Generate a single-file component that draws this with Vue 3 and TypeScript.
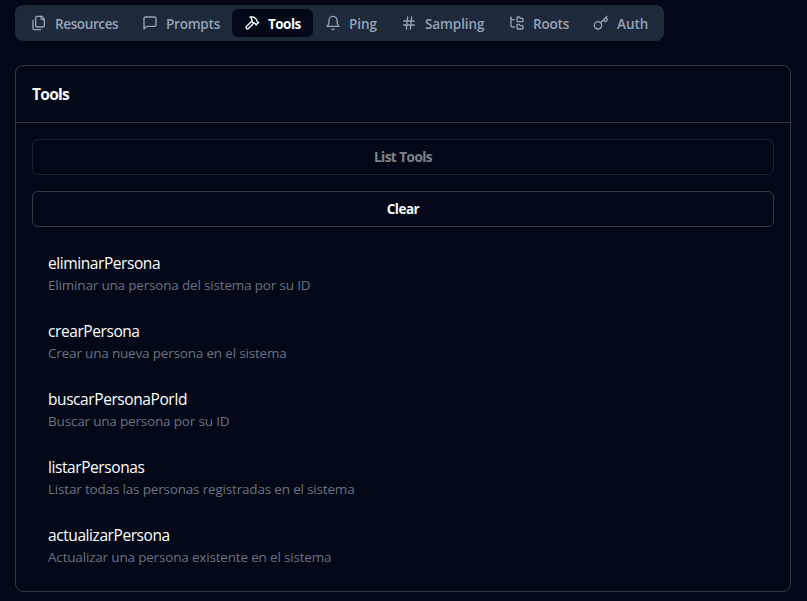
<script setup lang="ts">
interface Tab {
  id: string
  label: string
  width: number
  tracking: number
  paths: string[]
}

interface Tool {
  name: string
  description: string
}

const tabs: Tab[] = [
  {
    id: 'resources',
    label: 'Resources',
    width: 111,
    tracking: -0.38,
    paths: [
      'M20 7h-3a2 2 0 0 1-2-2V2',
      'M9 18a2 2 0 0 1-2-2V4a2 2 0 0 1 2-2h7l4 4v10a2 2 0 0 1-2 2Z',
      'M3 7.6v12.8A1.6 1.6 0 0 0 4.6 22h9.8',
    ],
  },
  {
    id: 'prompts',
    label: 'Prompts',
    width: 102,
    tracking: -0.22,
    paths: ['M21 15a2 2 0 0 1-2 2H7l-4 4V5a2 2 0 0 1 2-2h14a2 2 0 0 1 2 2z'],
  },
  {
    id: 'tools',
    label: 'Tools',
    width: 81,
    tracking: -0.3,
    paths: [
      'm15 12-8.373 8.373a1 1 0 1 1-3-3L12 9',
      'm18 15 4-4',
      'm21.5 11.5-1.914-1.914A2 2 0 0 1 19 8.172V7l-2.26-2.26a6 6 0 0 0-4.202-1.756L9 2.96l.92.82A6.18 6.18 0 0 1 12 8.4V10l2 2h1.172a2 2 0 0 1 1.414.586L18.5 14.5',
    ],
  },
  {
    id: 'ping',
    label: 'Ping',
    width: 76,
    tracking: -0.05,
    paths: [
      'M6 8a6 6 0 0 1 12 0c0 7 3 9 3 9H3s3-2 3-9',
      'M10.3 21a1.94 1.94 0 0 0 3.4 0',
    ],
  },
  {
    id: 'sampling',
    label: 'Sampling',
    width: 108,
    tracking: -0.1,
    paths: ['M4 9h16', 'M4 15h16', 'M10 3 8 21', 'M16 3l-2 18'],
  },
  {
    id: 'roots',
    label: 'Roots',
    width: 84,
    tracking: -0.2,
    paths: [
      'M20 10a1 1 0 0 0 1-1V6a1 1 0 0 0-1-1h-2.5a1 1 0 0 1-.8-.4l-.9-1.2A1 1 0 0 0 15 3h-2a1 1 0 0 0-1 1v5a1 1 0 0 0 1 1Z',
      'M20 21a1 1 0 0 0 1-1v-3a1 1 0 0 0-1-1h-2.9a1 1 0 0 1-.88-.55l-.42-.85a1 1 0 0 0-.92-.6H13a1 1 0 0 0-1 1v5a1 1 0 0 0 1 1Z',
      'M3 5a2 2 0 0 0 2 2h3',
      'M3 3v13a2 2 0 0 0 2 2h3',
    ],
  },
  {
    id: 'auth',
    label: 'Auth',
    width: 79,
    tracking: -0.05,
    paths: [
      'm15.5 7.5 2.3 2.3a1 1 0 0 0 1.4 0l2.1-2.1a1 1 0 0 0 0-1.4L19 4',
      'm21 2-9.6 9.6',
      'M13 15.5a5.5 5.5 0 1 1-11 0a5.5 5.5 0 1 1 11 0',
    ],
  },
]

const activeTab = 'tools'

const tools: Tool[] = [
  { name: 'eliminarPersona', description: 'Eliminar una persona del sistema por su ID' },
  { name: 'crearPersona', description: 'Crear una nueva persona en el sistema' },
  { name: 'buscarPersonaPorId', description: 'Buscar una persona por su ID' },
  { name: 'listarPersonas', description: 'Listar todas las personas registradas en el sistema' },
  { name: 'actualizarPersona', description: 'Actualizar una persona existente en el sistema' },
]
</script>

<template>
  <main class="page">
    <nav class="tabs">
      <button
        v-for="tab in tabs"
        :key="tab.id"
        class="tab"
        :class="{ active: tab.id === activeTab }"
        :style="{ width: tab.width + 'px', letterSpacing: tab.tracking + 'px' }"
      >
        <svg class="icon" viewBox="0 0 24 24">
          <path v-for="d in tab.paths" :key="d" :d="d" />
        </svg>
        <span class="label">{{ tab.label }}</span>
      </button>
    </nav>

    <section class="card">
      <header class="card-header">
        <h3>Tools</h3>
      </header>
      <div class="card-body">
        <button class="action" disabled>List Tools</button>
        <button class="action">Clear</button>
        <ul class="list">
          <li v-for="tool in tools" :key="tool.name" class="item">
            <span class="name">{{ tool.name }}</span>
            <span class="description">{{ tool.description }}</span>
          </li>
        </ul>
      </div>
    </section>
  </main>
</template>

<style>
body {
  background: #020817;
}
</style>

<style scoped>
.page {
  box-sizing: border-box;
  height: 601px;
  padding: 5px 16px 0 15px;
  background: #020817;
  color: #f8fafc;
  font-family: 'Segoe UI', 'Open Sans', 'Noto Sans', sans-serif;
  overflow: hidden;
}

.tabs {
  display: flex;
  box-sizing: border-box;
  width: 649px;
  height: 36px;
  padding: 4px;
  border-radius: 8px;
  background: #1e293b;
}

.tab {
  display: flex;
  flex: none;
  align-items: center;
  gap: 8px;
  box-sizing: border-box;
  height: 28px;
  padding: 0 0 0 12px;
  border: 0;
  border-radius: 6px;
  background: transparent;
  color: #94a3b8;
  font: inherit;
  font-size: 13.5px;
  font-weight: 600;
  white-space: nowrap;
}

.label {
  padding-top: 1px;
  line-height: 20px;
}

.tab.active {
  background: #020817;
  color: #f8fafc;
}

.tab.active .label {
  font-weight: 700;
  letter-spacing: -0.55px;
}

.icon {
  flex: none;
  width: 16px;
  height: 16px;
  fill: none;
  stroke: currentColor;
  stroke-width: 2;
  stroke-linecap: round;
  stroke-linejoin: round;
}

.card {
  box-sizing: border-box;
  margin-top: 24px;
  border: 1px solid #303846;
  border-radius: 8px;
}

.card-header {
  padding: 16px;
  border-bottom: 1px solid #303846;
}

h3 {
  margin: 0;
  font-size: 15.5px;
  font-weight: 700;
  line-height: 24px;
  letter-spacing: -0.7px;
}

.card-body {
  display: flex;
  flex-direction: column;
  gap: 16px;
  padding: 16px;
}

.action {
  box-sizing: border-box;
  height: 36px;
  padding: 0;
  border: 1px solid #303a4a;
  border-radius: 6px;
  background: #020817;
  color: #f8fafc;
  font: inherit;
  font-size: 13.5px;
  font-weight: 700;
  letter-spacing: -0.5px;
}

.action:disabled {
  opacity: 0.5;
}

.list {
  display: flex;
  flex-direction: column;
  gap: 8px;
  margin: 0;
  padding: 0;
  list-style: none;
}

.item {
  display: flex;
  flex-direction: column;
  padding: 8px 16px;
}

.name {
  font-size: 15.5px;
  line-height: 24px;
  letter-spacing: -0.42px;
  color: #fff;
}

.description {
  font-size: 13.5px;
  line-height: 20px;
  color: #6b7280;
  letter-spacing: -0.18px;
}
</style>
